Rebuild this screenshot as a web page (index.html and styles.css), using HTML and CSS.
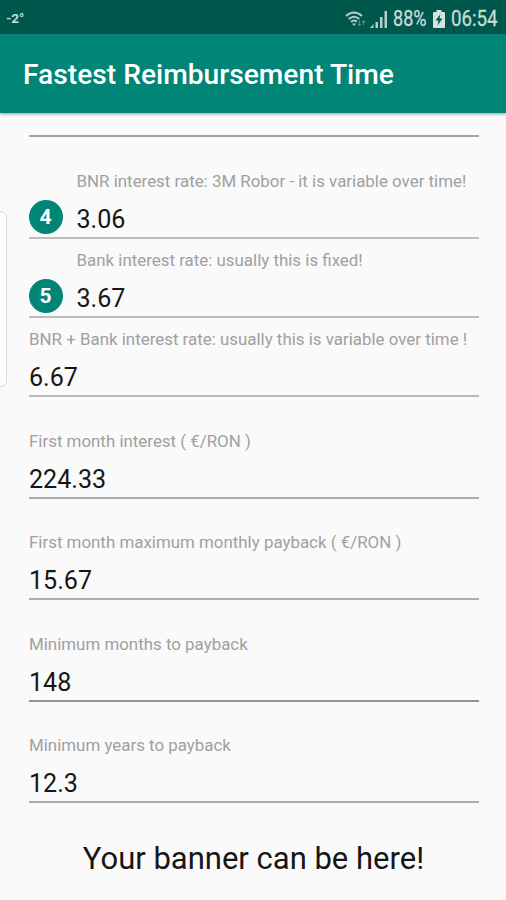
FILE: index.html
```html
<!DOCTYPE html>
<html lang="en">
<head>
<meta charset="utf-8">
<title>Fastest Reimbursement Time</title>
<link rel="stylesheet" href="styles.css">
</head>
<body>
<div class="status">
  <span class="temp">-2°</span>
  <div class="indicators">
    <svg class="wifi" width="22" height="18" viewBox="0 0 22 18" fill="none" stroke="#b5d0ca" stroke-width="1.9">
      <path d="M1 6Q9-1 17 6"/><path d="M3.700 9Q9 4.300 14.300 9"/><path d="M6 11.800Q9 9.300 12 11.800"/>
      <path d="M7 13.500h4L9 16z" fill="#b5d0ca" stroke="none"/>
      <path d="M14.500 10.500v5m-1.500-1.500 1.500 2 1.500-2M18.500 15v-4m-1.500 1.500 1.500-2 1.500 2" stroke="#5d938a" stroke-width="1"/>
    </svg>
    <svg class="signal" width="18" height="18" viewBox="0 0 18 18" fill="#b5d0ca">
      <path d="M0 18 3.500 14v4zM5.500 12H8v6H5.500zM10 7h2.500v11H10zM14.500 1H17v17h-2.500z"/>
    </svg>
    <span class="level">88%</span>
    <svg class="battery" width="12" height="18" viewBox="0 0 12 18">
      <path d="M3.500 0h5v2H11q1 0 1 1v14q0 1-1 1H1q-1 0-1-1V3q0-1 1-1h2.500z" fill="#d5e4e1"/>
      <path d="M7.500 4 2.500 10.500H5.500L4.500 15.500 9.500 8.500H6.500z" fill="#00574b"/>
    </svg>
    <span class="clock">06:54</span>
  </div>
</div>
<header class="appbar"><h1 class="title">Fastest Reimbursement Time</h1></header>
<div class="edge"></div>
<main class="form">
  <div class="previous"></div>
  <section class="field numbered">
    <div class="label">BNR interest rate: 3M Robor - it is variable over time!</div>
    <div class="value"><span class="badge">4</span>3.06</div>
  </section>
  <section class="field numbered compact">
    <div class="label">Bank interest rate: usually this is fixed!</div>
    <div class="value"><span class="badge">5</span>3.67</div>
  </section>
  <section class="field compact">
    <div class="label">BNR + Bank interest rate: usually this is variable over time !</div>
    <div class="value">6.67</div>
  </section>
  <section class="field">
    <div class="label">First month interest ( €/RON )</div>
    <div class="value">224.33</div>
  </section>
  <section class="field">
    <div class="label">First month maximum monthly payback ( €/RON )</div>
    <div class="value">15.67</div>
  </section>
  <section class="field dark">
    <div class="label">Minimum months to payback</div>
    <div class="value">148</div>
  </section>
  <section class="field">
    <div class="label">Minimum years to payback</div>
    <div class="value">12.3</div>
  </section>
</main>
<footer class="banner"><span class="bannertext">Your banner can be here!</span></footer>
</body>
</html>
```

FILE: styles.css
```css
* { box-sizing: border-box; }
body {
  margin: 0;
  height: 900px;
  overflow: hidden;
  background: #fafafa;
  color: #161616;
  font-family: Roboto, sans-serif;
}
.status {
  height: 34px;
  padding: 0 8px 0 6px;
  display: flex;
  align-items: center;
  justify-content: space-between;
  background: #00574b;
  color: #c8dcd8;
}
.temp { font-size: 13.500px; font-weight: 700; padding-top: 1px; }
.indicators { display: flex; align-items: center; height: 34px; padding-top: 3px; }
.wifi { margin-right: 3px; }
.signal { margin-right: 5px; }
.battery { margin: 0 6px 0 5px; }
.level, .clock {
  font-size: 22px;
  line-height: 32px;
  transform-origin: left center;
  white-space: nowrap;
  -webkit-text-stroke: .3px currentColor;
}
.level { width: 35px; transform: scaleX(.82); }
.clock { width: 47px; transform: scaleX(.85); }
.appbar {
  height: 79px;
  padding: 3px 0 0 23px;
  display: flex;
  align-items: center;
  background: #008577;
  box-shadow: 0 1px 3px rgba(0, 0, 0, .4);
}
.title {
  margin: 0;
  color: #fff;
  font-size: 28.200px;
  font-weight: 500;
  line-height: 36px;
  white-space: nowrap;
}
.edge {
  position: absolute;
  left: -8px;
  top: 211px;
  width: 15px;
  height: 176px;
  border: 1px solid #d9d9d9;
  border-radius: 6px;
  background: #fdfdfd;
}
.form { padding: 22px 27px 0 29px; }
.previous { height: 2px; background: #a3a5a4; }
.field {
  height: 101.600px;
  display: flex;
  flex-direction: column;
  justify-content: flex-end;
  padding-bottom: 2px;
  border-bottom: 2px solid #acaeae;
}
.compact { height: 79.200px; }
.dark { border-color: #929493; }
.numbered { padding-left: 47.500px; border-color: #bcbdbd; }
.compact:not(.numbered) { border-color: #b8b9b9; }
.label {
  height: 20px;
  margin-bottom: 12px;
  color: #a0a0a0;
  font-size: 16.900px;
  line-height: 20px;
  white-space: nowrap;
}
.value {
  position: relative;
  height: 32px;
  font-size: 25.100px;
  line-height: 33px;
}
.badge {
  position: absolute;
  left: -48px;
  top: -2.500px;
  width: 34px;
  height: 34px;
  border-radius: 50%;
  background: #008577;
  color: #fff;
  font-size: 21px;
  font-weight: 700;
  line-height: 34px;
  text-align: center;
}
.banner {
  height: 96px;
  display: flex;
  align-items: center;
  justify-content: center;
  padding: 16px 0 0 1px;
}
.bannertext { font-size: 31px; line-height: 40px; white-space: nowrap; }
```
